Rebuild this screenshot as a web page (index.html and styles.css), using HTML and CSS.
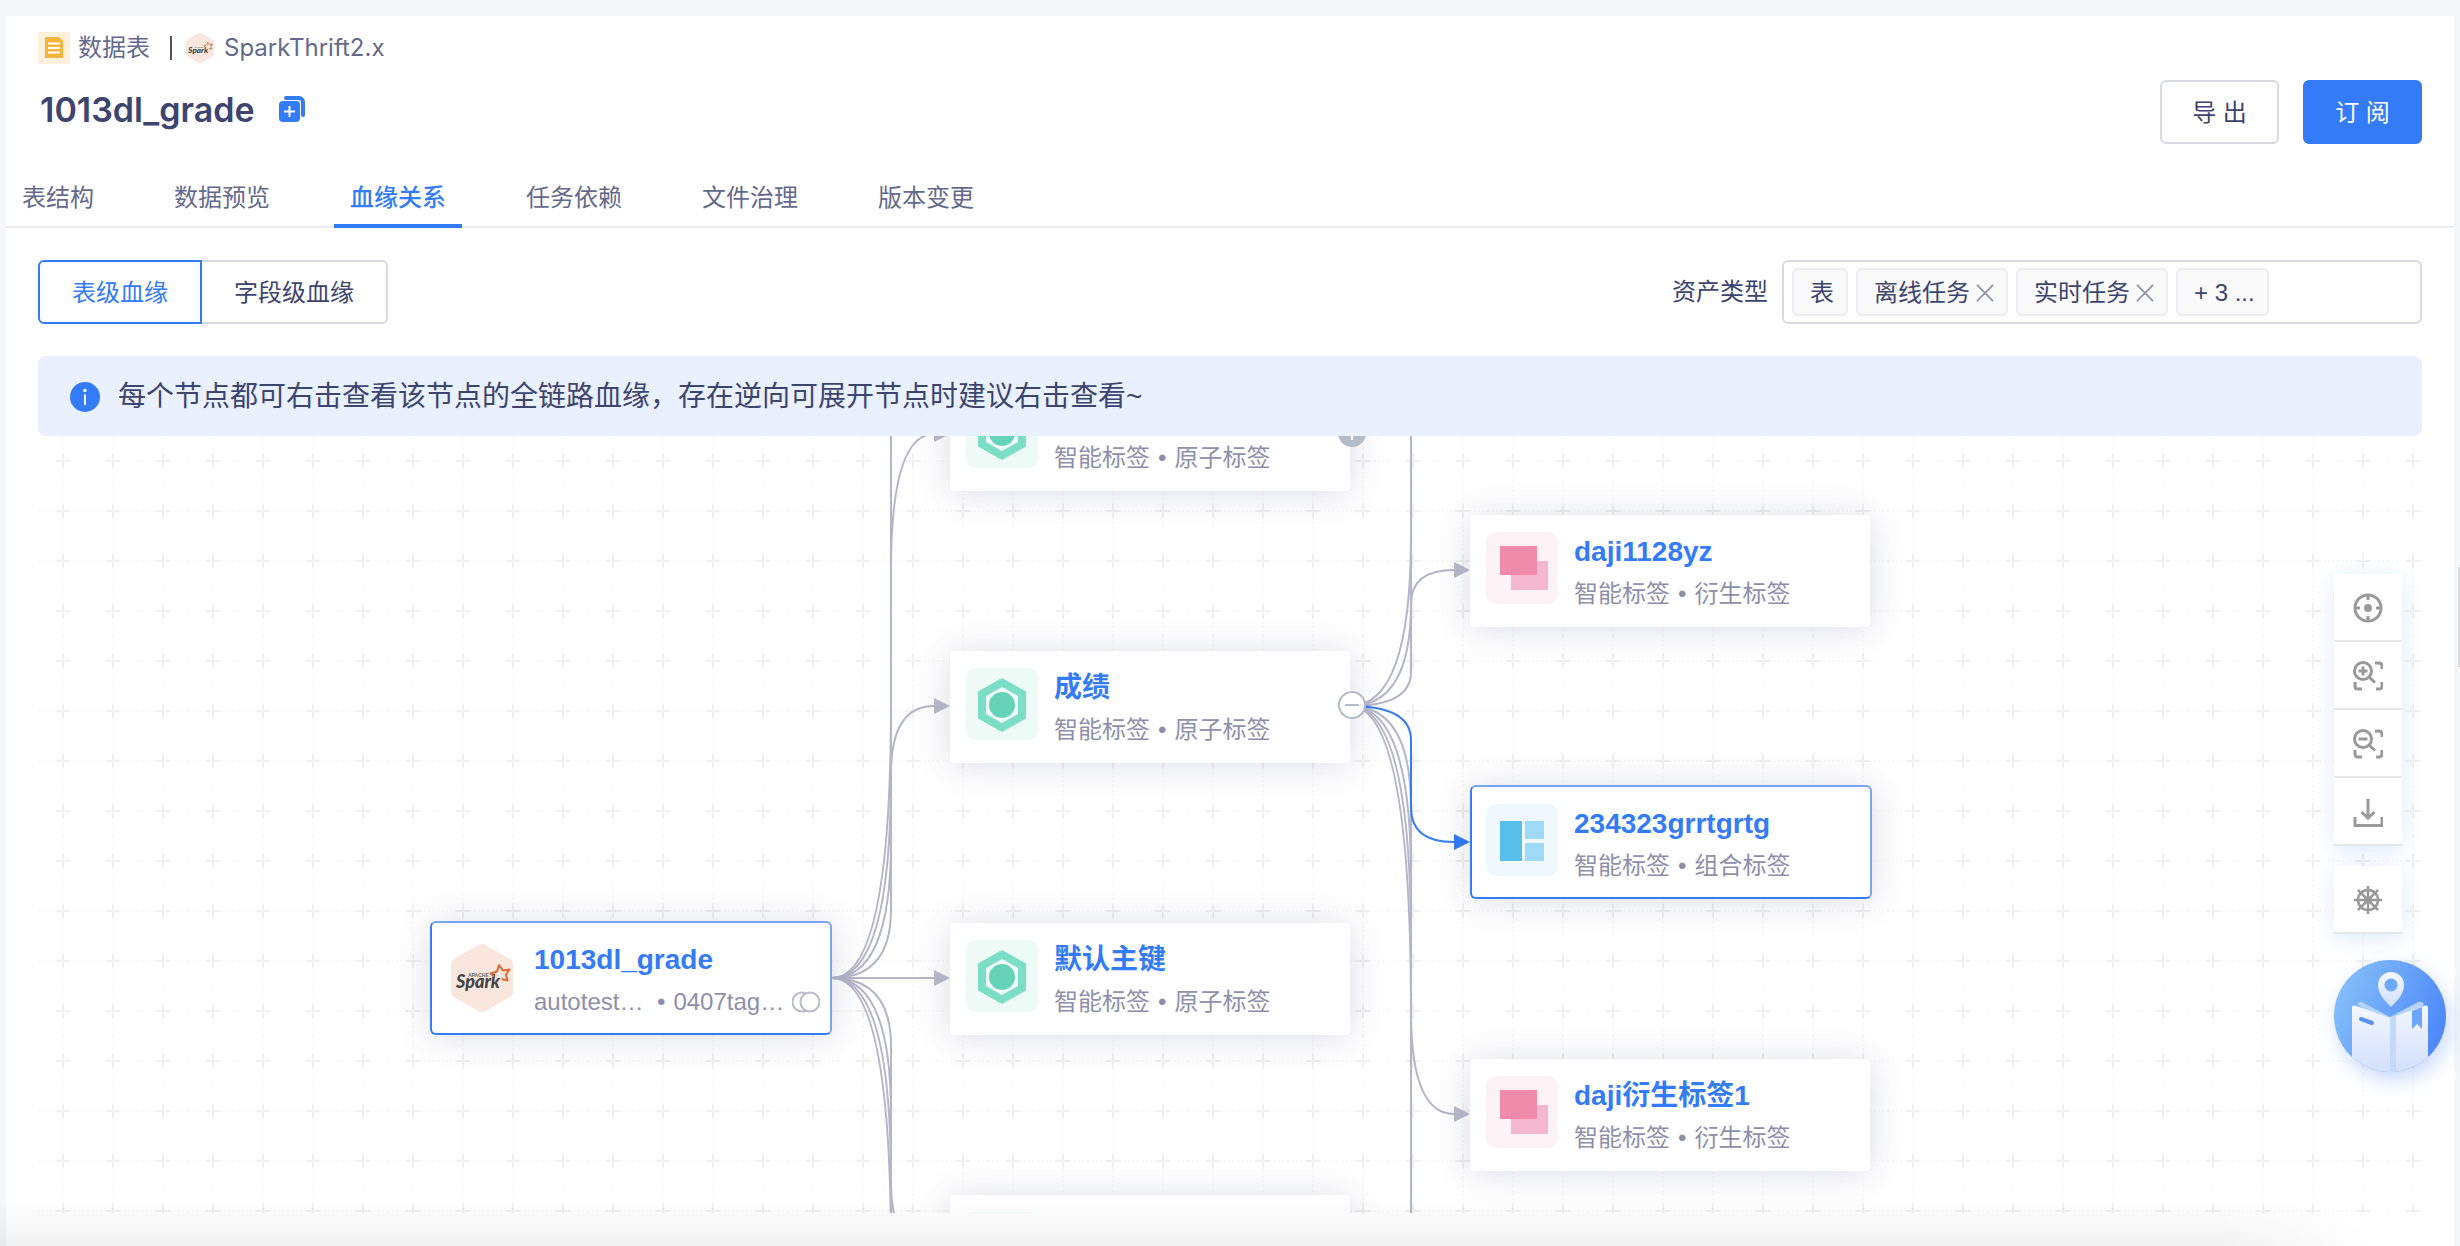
FILE: index.html
```html
<!DOCTYPE html>
<html lang="zh-CN">
<head>
<meta charset="utf-8">
<title>1013dl_grade</title>
<link rel="stylesheet" href="styles.css">
</head>
<body>
<svg class="defs" aria-hidden="true">
  <defs>
    <symbol id="spark" viewBox="0 0 62 70">
      <path d="M28 1.500q3-1.500 6 0L59 16q3 1.500 3 4v30q0 2.500-3 4L34 68.500q-3 1.500-6 0L3 54Q0 52.500 0 50V20q0-2.500 3-4z" fill="#f9e7de"/>
      <text x="5" y="45" class="spark-word">Spark</text>
      <text x="17" y="34" class="spark-apache">APACHE</text>
      <path d="M43 33.500L39.500 30.500 46 28.500 48 22 52 27.500 58.500 26.500 55 31.500 56.500 37.500 50.500 36" fill="none" stroke="#dc6933" stroke-width="2" stroke-linejoin="round"/>
    </symbol>
    <symbol id="atom" viewBox="0 0 72 72">
      <rect width="72" height="72" rx="9" fill="#eefaf6"/>
      <path d="M36 10l24 13.500v27L36 64 12 50.500v-27z" fill="#7bdec5"/>
      <path d="M36 19l16 9v18l-16 9-16-9V28z" fill="#f1fcf9"/>
      <circle cx="36" cy="37" r="13" fill="#65d3b6"/>
    </symbol>
    <symbol id="derive" viewBox="0 0 72 72">
      <rect width="72" height="72" rx="9" fill="#fdf2f6"/>
      <rect x="25" y="29" width="37" height="29" fill="#f5b7ce"/>
      <rect x="14" y="14" width="37" height="29" fill="#f08bab"/>
    </symbol>
    <symbol id="combo" viewBox="0 0 72 72">
      <rect width="72" height="72" rx="9" fill="#eff9fd"/>
      <rect x="14" y="17" width="22" height="40" fill="#57c0ea"/>
      <rect x="39" y="17" width="19" height="18" fill="#9fd9f8"/>
      <rect x="39" y="39" width="19" height="18" fill="#9fd9f8"/>
    </symbol>
  </defs>
</svg>
<main class="panel">
  <header class="head">
    <div class="head-info">
      <div class="crumbs">
        <svg class="crumb-type" viewBox="0 0 32 32" aria-hidden="true"><rect width="32" height="32" rx="2" fill="#fcefdb"/><path d="M8 5h13l4 4v16a1 1 0 0 1-1 1H8a1 1 0 0 1-1-1V6a1 1 0 0 1 1-1z" fill="#f3b33d"/><path d="M10 11.500h12M10 16h12M10 20.500h12" stroke="#fff" stroke-width="2"/></svg>
        <span>数据表</span>
        <i class="crumb-line"></i>
        <svg class="crumb-spark" aria-hidden="true"><use href="#spark"/></svg>
        <span>SparkThrift2.x</span>
      </div>
      <div class="title-row">
        <h1>1013dl_grade</h1>
        <button class="copy" aria-label="复制"><svg viewBox="0 0 26 26"><path d="M7 2h13a4 4 0 0 1 4 4v13" fill="none" stroke="#337bf7" stroke-width="4" stroke-linecap="round"/><rect x="-1" y="4" width="23" height="23" rx="5" fill="#fff"/><rect y="5" width="21" height="21" rx="4" fill="#337bf7"/><path d="M5 15.500h11M10.500 10v11" stroke="#fff" stroke-width="2"/></svg></button>
      </div>
    </div>
    <div class="actions">
      <button class="btn">导 出</button>
      <button class="btn btn-primary">订 阅</button>
    </div>
  </header>
  <nav class="tabs">
    <a href="#" class="tab">表结构</a>
    <a href="#" class="tab">数据预览</a>
    <a href="#" class="tab tab-on">血缘关系</a>
    <a href="#" class="tab">任务依赖</a>
    <a href="#" class="tab">文件治理</a>
    <a href="#" class="tab">版本变更</a>
  </nav>
  <section class="body">
    <div class="filters">
      <div class="segment">
        <button class="seg seg-on">表级血缘</button>
        <button class="seg">字段级血缘</button>
      </div>
      <div class="asset">
        <span id="asset-label">资产类型</span>
        <div class="multi" role="group" aria-labelledby="asset-label">
          <span class="tag">表</span>
          <span class="tag">离线任务<button class="tag-x" aria-label="移除离线任务"><svg viewBox="0 0 20 20"><path d="M1 1l18 18M19 1L1 19"/></svg></button></span>
          <span class="tag">实时任务<button class="tag-x" aria-label="移除实时任务"><svg viewBox="0 0 20 20"><path d="M1 1l18 18M19 1L1 19"/></svg></button></span>
          <span class="tag">+ 3 ...</span>
        </div>
      </div>
    </div>
    <div class="notice">
      <svg class="info" viewBox="0 0 30 30" aria-hidden="true"><circle cx="15" cy="15" r="15" fill="#337bf7"/><circle cx="15" cy="8.500" r="1.700" fill="#fff"/><path d="M15 12.500v10.500" stroke="#fff" stroke-width="2"/></svg>
      <span>每个节点都可右击查看该节点的全链路血缘，存在逆向可展开节点时建议右击查看~</span>
    </div>
    <div class="canvas">
      <svg class="grid" aria-hidden="true">
        <defs><pattern id="cross" width="50" height="50" patternUnits="userSpaceOnUse">
          <path d="M0 25h50M25 0v50" stroke="#fafafa" stroke-width="2" stroke-dasharray="2 2"/>
          <path d="M18 25h14M25 18v14" stroke="#f0f0f0" stroke-width="2"/>
        </pattern></defs>
        <rect width="100%" height="100%" fill="url(#cross)"/>
      </svg>
      <svg class="edges" aria-hidden="true">
        <g transform="translate(0 -1)">
        <g class="edge">
          <path d="M794 543Q853 543 853 475V339Q853 271 896 271"/>
          <path d="M794 543Q853 543 853 407V135Q853 -1 896 -1"/>
          <path d="M794 543Q853 543 853 339V0"/>
          <path d="M794 543Q853 543 853 271V0"/>
          <path d="M794 543H896"/>
          <path d="M794 543Q853 543 853 611V747Q853 815 896 815"/>
          <path d="M794 543Q853 543 853 679V800"/>
          <path d="M794 543Q853 543 853 747V800"/>
          <path d="M794 543Q853 543 853 815"/>
          <path d="M1312 271Q1373 271 1373 237V169Q1373 135 1416 135"/>
          <path d="M1312 271Q1373 271 1373 169V0"/>
          <path d="M1312 271Q1373 271 1373 101V0"/>
          <path d="M1312 271Q1373 271 1373 373V577Q1373 679 1416 679"/>
          <path d="M1312 271Q1373 271 1373 441V800"/>
          <path d="M1312 271Q1373 271 1373 509V800"/>
          <path d="M1312 271Q1373 271 1373 577V800"/>
        </g>
        <path class="edge-on" d="M1312 271Q1373 271 1373 305V373Q1373 407 1416 407"/>
        <g class="arrow">
          <path d="M896 -9l16 8-16 8z"/><path d="M896 263l16 8-16 8z"/><path d="M896 535l16 8-16 8z"/>
          <path d="M1416 127l16 8-16 8z"/><path d="M1416 671l16 8-16 8z"/>
        </g>
        <path class="arrow-on" d="M1416 399l16 8-16 8z"/>
        </g>
      </svg>
      <article class="node node-on" style="left:392px;top:485px">
        <svg class="node-spark" aria-hidden="true"><use href="#spark"/></svg>
        <div class="node-text">
          <a href="#" class="node-name">1013dl_grade</a>
          <div class="node-sub"><span class="clip">autotest…</span><i>•</i><span>0407tag…</span><svg class="rings" viewBox="0 0 28 22" aria-hidden="true"><circle cx="10" cy="11" r="9.500"/><circle cx="18" cy="11" r="9.500" fill="#fff"/></svg></div>
        </div>
      </article>
      <article class="node" style="left:912px;top:-57px">
        <svg class="node-icon" aria-hidden="true"><use href="#atom"/></svg>
        <div class="node-text node-text-low"><div class="node-sub"><span>智能标签</span><i>•</i><span>原子标签</span></div></div>
        <button class="toggle" aria-label="展开"><svg viewBox="0 0 30 30"><circle cx="15" cy="15" r="14" fill="#b1bdc7"/><path d="M8 15h14M15 8v14" stroke="#fff" stroke-width="2"/></svg></button>
      </article>
      <article class="node" style="left:912px;top:215px">
        <svg class="node-icon" aria-hidden="true"><use href="#atom"/></svg>
        <div class="node-text"><a href="#" class="node-name">成绩</a><div class="node-sub"><span>智能标签</span><i>•</i><span>原子标签</span></div></div>
        <button class="toggle" aria-label="收起"><svg viewBox="0 0 30 30"><circle cx="15" cy="15" r="13" fill="#fff" stroke="#b1bdc7" stroke-width="2"/><path d="M8 15h14" stroke="#b1bdc7" stroke-width="2"/></svg></button>
      </article>
      <article class="node" style="left:912px;top:487px">
        <svg class="node-icon" aria-hidden="true"><use href="#atom"/></svg>
        <div class="node-text"><a href="#" class="node-name">默认主键</a><div class="node-sub"><span>智能标签</span><i>•</i><span>原子标签</span></div></div>
      </article>
      <article class="node" style="left:912px;top:759px">
        <svg class="node-icon" aria-hidden="true"><use href="#atom"/></svg>
      </article>
      <article class="node" style="left:1432px;top:79px">
        <svg class="node-icon" aria-hidden="true"><use href="#derive"/></svg>
        <div class="node-text"><a href="#" class="node-name">daji1128yz</a><div class="node-sub"><span>智能标签</span><i>•</i><span>衍生标签</span></div></div>
      </article>
      <article class="node node-on" style="left:1432px;top:349px">
        <svg class="node-icon" aria-hidden="true"><use href="#combo"/></svg>
        <div class="node-text"><a href="#" class="node-name">234323grrtgrtg</a><div class="node-sub"><span>智能标签</span><i>•</i><span>组合标签</span></div></div>
      </article>
      <article class="node" style="left:1432px;top:623px">
        <svg class="node-icon" aria-hidden="true"><use href="#derive"/></svg>
        <div class="node-text"><a href="#" class="node-name">daji衍生标签1</a><div class="node-sub"><span>智能标签</span><i>•</i><span>衍生标签</span></div></div>
      </article>
    </div>
  </section>
</main>
<aside class="tools">
  <div class="tool-group">
    <button class="tool" aria-label="定位"><svg viewBox="0 0 30 30"><circle cx="15" cy="15" r="13"/><path d="M15 2v5M15 23v5M2 15h5M23 15h5"/><circle cx="15" cy="15" r="2.500" fill="#999"/></svg></button>
    <button class="tool" aria-label="放大"><svg viewBox="0 0 30 30"><circle cx="10" cy="10" r="8.500"/><path d="M10 5.500v9M5.500 10h9" stroke-width="3"/><path d="M16.500 16.500l5.500 5"/><path d="M22 2h4q3 0 3 3v3M29 21v4q0 3-3 3h-3M9 28H5q-3 0-3-3v-4"/></svg></button>
    <button class="tool" aria-label="缩小"><svg viewBox="0 0 30 30"><circle cx="10" cy="10" r="8.500"/><path d="M5.500 10h9"/><path d="M16.500 16.500l5.500 5"/><path d="M22 2h4q3 0 3 3v3M29 21v4q0 3-3 3h-3M9 28H5q-3 0-3-3v-4"/></svg></button>
    <button class="tool" aria-label="下载"><svg viewBox="0 0 30 30"><path d="M15 2v19M8.500 15l6.500 6 6.500-6M2 20v8.500h27V20"/></svg></button>
  </div>
  <div class="tool-group">
    <button class="tool" aria-label="设置"><svg viewBox="0 0 30 30"><circle cx="15" cy="15" r="10" stroke-width="2.500"/><path d="M15 1v28M1 15h28M5 5l20 20M25 5L5 25" stroke-width="2.500"/><circle cx="15" cy="15" r="2" fill="#999"/></svg></button>
  </div>
  <button class="guide" aria-label="使用指引">
    <svg viewBox="0 0 112 112">
      <defs>
        <linearGradient id="ball" x1="0" y1=".3" x2="1" y2=".7"><stop offset="0" stop-color="#84bffa"/><stop offset="1" stop-color="#4b85f9"/></linearGradient>
        <linearGradient id="page" x1="0" y1="0" x2="0" y2="1"><stop offset="0" stop-color="#f3f7ff"/><stop offset="1" stop-color="#d3e0fb"/></linearGradient>
        <clipPath id="round"><circle cx="56" cy="56" r="56"/></clipPath>
      </defs>
      <g clip-path="url(#round)">
        <rect width="112" height="112" fill="url(#ball)"/>
        <path d="M24 45q0-4 4-3l28 15 28-15q5-1 6 3l-34 22z" fill="#b5d2fc"/>
        <path d="M18 47q0-2 3-1.500L56 58l35-12.500q3-.5 3 1.500v65H18z" fill="url(#page)"/>
        <path d="M56 58l6-2v56h-6z" fill="#c3d8fb"/>
        <path d="M27 59l11 4" stroke="#5891f3" stroke-width="4" stroke-linecap="round"/>
        <path d="M78 51l10-4v22l-5-5-5 5z" fill="#6ca7fa"/>
        <path d="M57 47C49 39 44 33 44 25a13 13 0 0 1 26 0c0 8-5 14-13 22z" fill="url(#page)"/>
        <circle cx="57" cy="25" r="6.500" fill="#6fa9f9"/>
      </g>
    </svg>
  </button>
</aside>
<div class="fade"></div>
<i class="thumb"></i>
</body>
</html>
```

FILE: styles.css
```css
* { box-sizing: border-box; }
body {
  margin: 0;
  height: 100vh;
  overflow: hidden;
  background: #f3f7fa;
  padding: 16px 6px 0;
  display: flex;
  color: #3d446e;
  font: 24px/32px "Liberation Sans", "Noto Sans CJK SC", sans-serif;
}
button { font: inherit; color: inherit; margin: 0; padding: 0; border: 0; background: none; cursor: pointer; }
a { color: inherit; text-decoration: none; }
svg { display: block; }
i { font-style: normal; }
.defs { position: absolute; width: 0; height: 0; }
.panel { flex: 1; min-width: 0; display: flex; flex-direction: column; background: #fff; }

.head { display: flex; justify-content: space-between; padding: 16px 32px 0; }
.crumbs { display: flex; align-items: center; color: #64698b; font-family: Inter, "Noto Sans CJK SC", sans-serif; }
.crumb-type { width: 32px; height: 32px; margin-right: 8px; }
.crumb-line { width: 2px; height: 24px; margin: 0 14px 0 20px; background: #555; }
.crumb-spark { width: 28px; height: 32px; margin-right: 10px; }
.title-row { display: flex; align-items: center; gap: 24px; margin-top: 24px; padding-left: 2px; }
h1 { margin: 0; padding-top: 2px; font: 600 34px/40px Inter, "Noto Sans CJK SC", sans-serif; }
.copy svg { width: 26px; height: 26px; }
.actions { display: flex; gap: 24px; margin-top: 48px; }
.btn { width: 119px; height: 64px; padding-top: 2px; border: 2px solid #d8dae2; border-radius: 6px; background: #fff; }
.btn-primary { background: #337bf7; border-color: #337bf7; color: #fff; }

.tabs { display: flex; gap: 48px; height: 68px; margin-top: 16px; border-bottom: 2px solid #ebecf2; color: #64698b; }
.tab { height: 68px; padding: 22px 16px 0; }
.tab-on { color: #337bf7; font-weight: 500; border-bottom: 4px solid #337bf7; }

.body { flex: 1; display: flex; flex-direction: column; padding: 32px 32px 0; }
.filters { display: flex; justify-content: space-between; }
.segment { display: flex; }
.seg { height: 64px; padding: 2px 32px 0; border: 2px solid #d8dae2; border-radius: 0 6px 6px 0; }
.seg-on { position: relative; margin-right: -2px; border-color: #337bf7; border-radius: 6px 0 0 6px; color: #337bf7; }
.asset { display: flex; align-items: center; gap: 14px; }
.multi { display: flex; align-items: center; gap: 8px; width: 640px; height: 64px; padding: 0 8px; border: 2px solid #d8dae2; border-radius: 6px; }
.tag { display: flex; align-items: center; gap: 6px; height: 48px; padding: 2px 12px 0 16px; border: 2px solid #ebecf2; border-radius: 6px; background: #fafafa; }
.tag-x svg { width: 18px; height: 18px; fill: none; stroke: #9295ad; stroke-width: 2; }
.notice { display: flex; align-items: center; gap: 18px; height: 80px; margin-top: 32px; padding: 2px 32px 0; border-radius: 8px; background: #e9f0fe; font-size: 28px; }
.info { width: 30px; height: 30px; }

.canvas { position: relative; height: 777px; overflow: hidden; }
.grid, .edges { position: absolute; top: 0; left: 0; width: 100%; height: 100%; }
.edge, .edge-on { fill: none; stroke: #b3b5c8; stroke-width: 2; }
.edge-on { stroke: #337bf7; }
.arrow { fill: #b9bacb; }
.arrow-on { fill: #337bf7; }
.node { position: absolute; display: flex; gap: 16px; width: 400px; height: 112px; padding: 17px 16px; border-radius: 4px; background: #fff; box-shadow: 0 2px 36px rgba(60, 65, 110, .18); }
.node-on { width: 402px; height: 114px; border: 2px solid #337bf7; border-top-color: #78a3f6; border-right-color: #78a3f6; padding: 17px 14px; border-radius: 6px; }
.node-icon { width: 72px; height: 72px; flex: none; }
.node-spark { width: 62px; height: 72px; flex: none; margin: 2px 5px; }
.node-text { padding-top: 2px; white-space: nowrap; }
.node-text-low { align-self: flex-end; }
.node-name { display: block; color: #337bf7; font-size: 28px; font-weight: 700; line-height: 36px; }
.node-sub { display: flex; align-items: center; gap: 8px; margin-top: 8px; color: #8d90aa; }
.clip { width: 115px; }
.rings { width: 28px; height: 22px; fill: none; stroke: #b9bccb; stroke-width: 2; }
.toggle { position: absolute; right: -17px; top: 39px; width: 30px; height: 30px; }

.spark-word { font: italic 900 18px Lato, sans-serif; fill: #444; }
.spark-apache { font: 700 5px "Liberation Sans", sans-serif; fill: #666; }

.tools { position: fixed; top: 574px; right: 14px; display: flex; flex-direction: column; align-items: flex-start; }
.tool-group { width: 68px; margin-bottom: 20px; background: #fff; box-shadow: 0 4px 20px rgba(51, 123, 247, .16); }
.tool { display: flex; align-items: center; justify-content: center; width: 68px; height: 68px; padding-top: 2px; border-bottom: 2px solid #e6e6e6; }
.tool svg { width: 30px; height: 30px; fill: none; stroke: #999; stroke-width: 3; }
.guide { width: 112px; height: 112px; margin-top: 6px; border-radius: 50%; box-shadow: 4px 8px 20px rgba(75, 133, 249, .3); }
.fade { position: fixed; left: 0; right: 0; bottom: 0; height: 46px; background: linear-gradient(transparent, rgba(0, 0, 0, .05)); -webkit-mask: linear-gradient(90deg, #000 90%, transparent 97%); mask: linear-gradient(90deg, #000 90%, transparent 97%); pointer-events: none; }
.thumb { position: fixed; right: 0; top: 567px; width: 2px; height: 100px; background: #dcdcdc; }
```
